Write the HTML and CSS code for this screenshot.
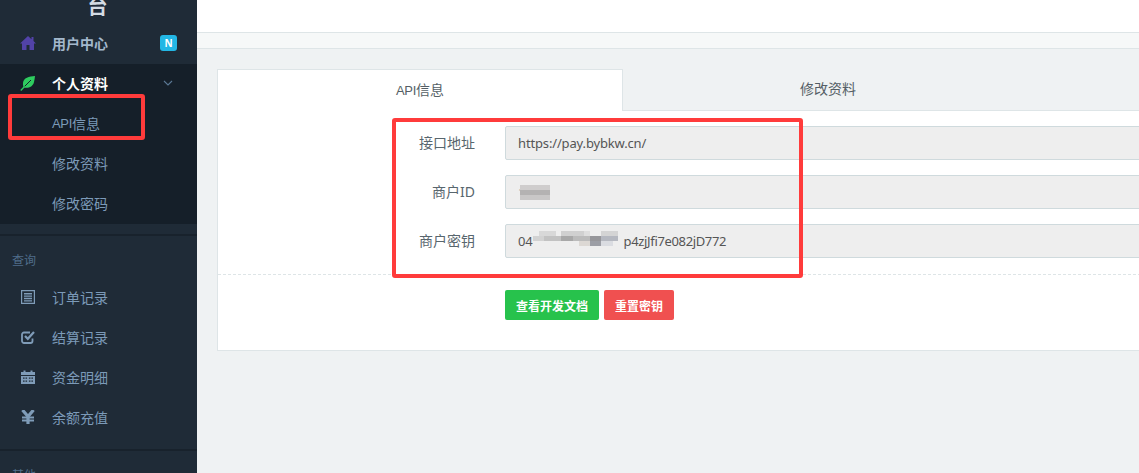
FILE: index.html
```html
<!DOCTYPE html>
<html lang="zh-CN">
<head>
  <meta charset="UTF-8">
  <title>API信息</title>
  <link rel="stylesheet" href="styles.css">
</head>
<body>
  <div class="app">
    <aside class="sidebar">
      <div class="brand">台</div>
      <a class="nav-item top">
        <svg class="icon" viewBox="0 0 16 16"><path fill="#5243a8" d="M8 1l3.500 3.200V2h2v4l2.500 2.500h-2V15H9.500v-5h-3v5H2V8.500H0z"/></svg>
        <span class="nav-text">用户中心</span>
        <span class="badge">N</span>
      </a>
      <div class="nav-group">
        <a class="nav-item open">
          <svg class="icon" viewBox="0 0 16 16">
            <path fill="#2ecc5f" d="M15 1C9 1.500 3.500 2.500 3 8c-.2 2 .3 3.500 1 4.500 4 1 9-.5 10-5.500.5-2 .8-4 1-6z"/>
            <path fill="none" stroke="#151f29" stroke-width="1" d="M4.500 11.500 11 5"/>
            <path fill="none" stroke="#2ecc5f" stroke-width="1.300" d="M.8 15.500 4.500 11.500"/>
          </svg>
          <span class="nav-text">个人资料</span>
          <svg class="chevron" viewBox="0 0 10 6"><path fill="none" stroke="#5b7995" stroke-width="1.100" d="M1 1l4 4 4-4"/></svg>
        </a>
        <a class="nav-item sub"><span class="api">API</span>信息</a>
        <a class="nav-item sub">修改资料</a>
        <a class="nav-item sub">修改密码</a>
      </div>
      <div class="nav-section">
        <div class="nav-title">查询</div>
        <a class="nav-item">
          <svg class="icon small" viewBox="0 0 14 14"><path fill="#7f9cb8" fill-rule="evenodd" d="M0 0h14v14H0zM1.200 1.200v11.600h11.600V1.200zM3 3h8v1.400H3zM3 5.400h8v1.400H3zM3 7.800h8v1.400H3zM3 10.200h8v1.400H3z"/></svg>
          <span class="nav-text">订单记录</span>
        </a>
        <a class="nav-item">
          <svg class="icon small" viewBox="0 0 14 14"><path fill="none" stroke="#7f9cb8" stroke-width="1.800" d="M11.500 8.500V11a2 2 0 0 1-2 2H3a2 2 0 0 1-2-2V4.500a2 2 0 0 1 2-2h6"/><path fill="none" stroke="#7f9cb8" stroke-width="2.200" d="M4 6l2.800 2.800L13 2"/></svg>
          <span class="nav-text">结算记录</span>
        </a>
        <a class="nav-item">
          <svg class="icon small" viewBox="0 0 14 14"><path fill="#7f9cb8" d="M0 2h2.500V.5h2V2h5V.5h2V2H14v3H0z"/><path fill="#7f9cb8" fill-rule="evenodd" d="M0 6h14v8H0zM2 7.500v1.200h1.600V7.500zM4.500 7.500v1.200h1.600V7.500zM7.900 7.500v1.200h1.600V7.500zM10.400 7.500v1.200H12V7.500zM2 10.500v1.200h1.600v-1.200zM4.500 10.500v1.200h1.600v-1.200zM7.900 10.500v1.200h1.600v-1.200zM10.400 10.500v1.200H12v-1.200z"/></svg>
          <span class="nav-text">资金明细</span>
        </a>
        <a class="nav-item">
          <svg class="icon small" viewBox="0 0 14 14"><path fill="none" stroke="#7f9cb8" stroke-width="3.200" d="M1.500 0 7 6.500 12.500 0M7 6v8"/><path fill="none" stroke="#7f9cb8" stroke-width="1.800" d="M1 7.500h12M1 10.500h12"/></svg>
          <span class="nav-text">余额充值</span>
        </a>
      </div>
      <div class="nav-section">
        <div class="nav-title">其他</div>
      </div>
    </aside>

    <main class="main">
      <div class="topbar"></div>
      <div class="crumbs"></div>
      <div class="content">
        <div class="tabs">
          <div class="tab active"><span class="api">API</span>信息</div>
          <div class="tab">修改资料</div>
          <div class="tab-rest"></div>
        </div>
        <div class="panel">
          <div class="form-row">
            <div class="form-label">接口地址</div>
            <div class="field">https://pay.bybkw.cn/</div>
          </div>
          <div class="form-row">
            <div class="form-label">商户ID</div>
            <div class="field">
              <span class="faint">1</span>
              <svg class="mosaic" width="30" height="15" viewBox="0 0 6 3" preserveAspectRatio="none" shape-rendering="crispEdges">
                <rect width="6" height="3" fill="#eeeeee"/>
                <rect width="6" height="1" fill="#cfcdcd"/>
                <rect y="1" width="6" height="1" fill="#b4b2b2"/>
                <rect y="2" width="6" height="1" fill="#c9c7c7"/>
              </svg>
            </div>
          </div>
          <div class="form-row">
            <div class="form-label">商户密钥</div>
            <div class="field">04<svg class="mosaic key" width="91" height="20" viewBox="0 0 16 4" preserveAspectRatio="none" shape-rendering="crispEdges">
                <rect width="16" height="4" fill="#eeeeee"/>
                <rect x="1" width="3" height="1" fill="#d8d8d8"/>
                <rect x="5" width="4" height="1" fill="#d0d0d0"/>
                <rect x="9" width="1" height="1" fill="#dedede"/>
                <rect x="12" width="3" height="1" fill="#d4d4d4"/>
                <rect y="1" width="2" height="1" fill="#d2d2d2"/>
                <rect x="2" y="1" width="3" height="1" fill="#c2c2c2"/>
                <rect x="5" y="1" width="2" height="1" fill="#a8a8a8"/>
                <rect x="7" y="1" width="3" height="1" fill="#bbbbbb"/>
                <rect x="10" y="1" width="2" height="1" fill="#96969a"/>
                <rect x="12" y="1" width="3" height="1" fill="#b5b8c0"/>
                <rect x="10" y="2" width="2" height="1" fill="#9c9ea5"/>
                <rect x="8" y="2" width="2" height="1" fill="#dcd8d4"/>
                <rect x="12" y="2" width="2" height="1" fill="#dadce1"/>
              </svg><span class="key-tail">p4zjJfi7e082jD772</span></div>
          </div>
          <div class="form-line"></div>
          <div class="form-actions">
            <button class="btn green">查看开发文档</button>
            <button class="btn red">重置密钥</button>
          </div>
        </div>
      </div>
    </main>
  </div>

  <div class="mark mark-nav"></div>
  <div class="mark mark-form"></div>
</body>
</html>
```

FILE: styles.css
```css
* {
  box-sizing: border-box;
}

html,
body {
  margin: 0;
  height: 100%;
  overflow: hidden;
}

body {
  font-family: "Noto Sans", "Noto Sans CJK SC", sans-serif;
  font-size: 13px;
  color: #58666e;
  background: #eff2f3;
}

.app {
  display: flex;
  height: 473px;
}

/* sidebar */
.sidebar {
  width: 197px;
  flex: none;
  overflow: hidden;
  background: #1f2b37;
  color: #7c9ab8;
}

.brand {
  height: 24px;
  line-height: 14px;
  padding-right: 2px;
  text-align: center;
  font-size: 20px;
  font-weight: bold;
  color: #d3dbe3;
}

.nav-item {
  display: flex;
  align-items: center;
  height: 40px;
  padding: 0 0 2px 20px;
  font-size: 14px;
}

.nav-item.top {
  color: #a3b8cc;
  font-weight: bold;
}

.nav-item.open {
  color: #fff;
  font-weight: bold;
}

.nav-item.sub {
  padding-left: 52px;
}

.api {
  font-family: "Liberation Sans", sans-serif;
  font-size: 13px;
  letter-spacing: -0.3px;
}

.icon {
  width: 16px;
  height: 16px;
  flex: none;
  margin-right: 16px;
}

.icon.small {
  width: 14px;
  height: 14px;
  margin: 0 17px 0 1px;
}

.nav-text {
  flex: 1;
}

.badge {
  width: 17px;
  height: 16px;
  margin-right: 20px;
  line-height: 16px;
  border-radius: 3px;
  text-align: center;
  font-size: 10px;
  font-weight: bold;
  color: #fff;
  background: #23b7e5;
}

.chevron {
  width: 10px;
  height: 6px;
  margin-right: 24px;
}

.nav-group {
  height: 160px;
  background: #151f29;
}

.nav-section {
  margin-top: 10px;
  padding-top: 16px;
  border-top: 2px solid #18222c;
}

.nav-section + .nav-section {
  margin-top: 11px;
}

.nav-title {
  height: 26px;
  padding-left: 12px;
  line-height: 18px;
  font-size: 12px;
  color: #4f6d8a;
}

/* main */
.main {
  flex: 1;
  min-width: 0;
  overflow: hidden;
}

.topbar {
  height: 33px;
  background: #fff;
  border-bottom: 1px solid #dee5e7;
}

.crumbs {
  height: 16px;
  background: #f6f8f8;
  border-bottom: 1px solid #dee5e7;
}

.content {
  padding: 20px 0 0 20px;
}

.tabs {
  display: flex;
  width: 1000px;
  height: 42px;
}

.tab {
  width: 410px;
  height: 42px;
  line-height: 40px;
  text-align: center;
  font-size: 14px;
  border-bottom: 1px solid #dee5e7;
  color: #555f66;
}

.tab.active {
  width: 406px;
  background: #fff;
  border: 1px solid #dee5e7;
  border-bottom: 0;
}

.tab-rest {
  flex: 1;
  border-bottom: 1px solid #dee5e7;
}

.panel {
  width: 1000px;
  height: 240px;
  padding-top: 15px;
  background: #fff;
  border: 1px solid #dee5e7;
  border-top: 0;
}

.form-row {
  display: flex;
  margin-bottom: 15px;
}

.form-label {
  width: 257px;
  flex: none;
  line-height: 34px;
  text-align: right;
  font-size: 14px;
}

.field {
  display: flex;
  align-items: center;
  height: 34px;
  margin-left: 30px;
  flex: 1;
  padding: 0 12px;
  font-size: 13px;
  letter-spacing: -0.15px;
  color: #555;
  background: #eee;
  border: 1px solid #cfdadd;
  border-radius: 2px;
}

.key-tail {
  letter-spacing: -0.35px;
}

/* the blur patch sits over the first digit */
.faint {
  margin-right: -5px;
  color: #999;
}

.mosaic {
  flex: none;
  position: relative;
  filter: blur(0.5px);
}

.form-line {
  margin-top: 16px;
  border-top: 1px dashed #dee5e7;
}

.form-actions {
  display: flex;
  gap: 5px;
  padding: 15px 0 0 287px;
}

.btn {
  height: 30px;
  padding: 0 11px;
  font: bold 12px "Noto Sans CJK SC", sans-serif;
  color: #fff;
  border: 0;
  border-radius: 2px;
}

.btn.green {
  background: #27c24c;
}

.btn.red {
  background: #f05050;
}

/* red boxes drawn over the screenshot */
.mark {
  position: absolute;
  border: 4px solid #ff3b3b;
  border-radius: 3px;
}

.mark-nav {
  left: 8px;
  top: 94px;
  width: 137px;
  height: 46px;
}

.mark-form {
  left: 392px;
  top: 118px;
  width: 411px;
  height: 160px;
}
```
